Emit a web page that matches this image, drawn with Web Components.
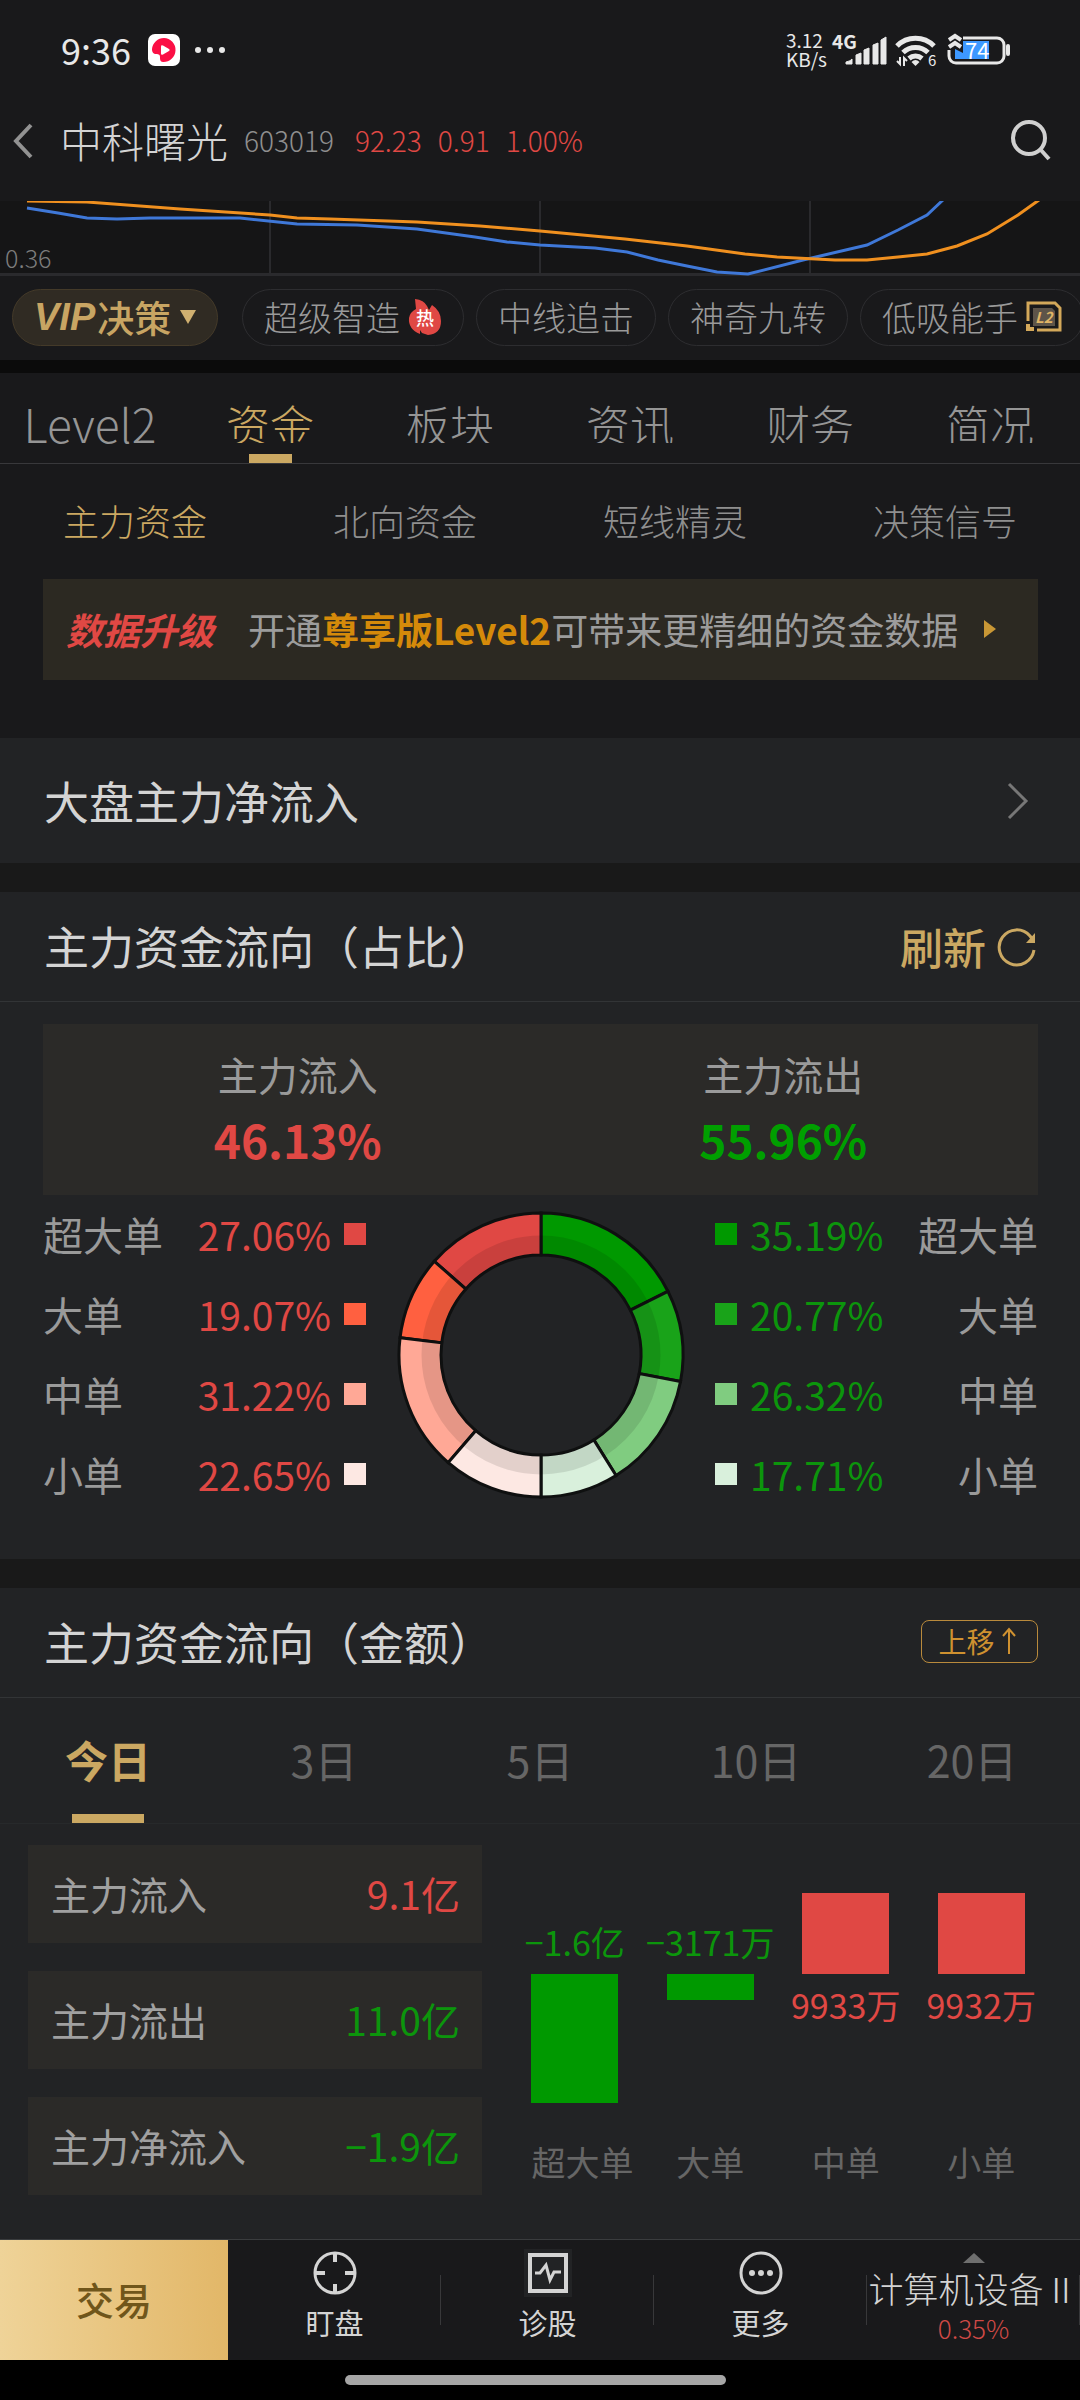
<!DOCTYPE html>
<html lang="zh-CN">
<head>
<meta charset="utf-8">
<meta name="viewport" content="width=device-width, initial-scale=1">
<title>中科曙光 603019</title>
<style>
  :root {
    --bg: #19191b;
    --band: #191919;
    --panel: #222325;
    --inset: #2b2a28;
    --line: #323436;
    --gold: #cba862;
    --red: #e04844;
    --green: #0c950c;
    --text: #d4d4d4;
    --muted: #9a9a9a;
    --dim: #666666;
  }
  body {
    margin: 0;
    background: #000;
    color: var(--text);
    font-family: "Noto Sans CJK SC", "Noto Sans", sans-serif;
  }
</style>
</head>
<body>
<stock-app></stock-app>

<script>
const BASE = `
  *, *::before, *::after { box-sizing: border-box; }
  button { font: inherit; color: inherit; background: none; border: 0; padding: 0; margin: 0; cursor: pointer; }
  a { color: inherit; text-decoration: none; }
  svg { display: block; flex: none; overflow: visible; }
`;

function define(name, css, html) {
  const template = document.createElement('template');
  customElements.define(name, class extends HTMLElement {
    constructor() {
      super();
      this.attachShadow({ mode: 'open' });
    }
    connectedCallback() {
      template.innerHTML = `<style>${BASE}${css}</style>${typeof html === 'function' ? html(this) : html}`;
      this.shadowRoot.replaceChildren(template.content.cloneNode(true));
    }
  });
}

/* ---------- system status bar ---------- */
define('status-bar', `
  :host { display: flex; align-items: center; justify-content: space-between; height: 100px; padding: 0 67px 0 61px; color: #e8e8e8; }
  .left, .right { display: flex; align-items: center; }
  time { font-size: 36px; line-height: 40px; margin-right: 17px; padding-bottom: 2px; }
  .dots { margin-left: 14px; }
  .speed { font-size: 19px; line-height: 19px; margin-right: 5px; padding-bottom: 2px; }
  .speed span { display: block; }
`, `
  <div class="left">
    <time>9:36</time>
    <svg width="32" height="32" viewBox="0 0 32 32"><rect width="32" height="32" rx="7" fill="#fff"/><path d="M16 4a12 12 0 1 1-1 24c-3 0-3-3-3-5 0-3-2-3-5-3-3-1-3-4-3-5A12 12 0 0 1 16 4z" fill="#fb0f45"/><path d="M13 12.500q0-2 2-1l6 3.500q1.500 1 0 2l-6 3.500q-2 1-2-1z" fill="#fff"/></svg>
    <svg class="dots" width="32" height="8" viewBox="0 0 32 8" fill="#e8e8e8"><circle cx="4" cy="4" r="3"/><circle cx="16" cy="4" r="3"/><circle cx="28" cy="4" r="3"/></svg>
  </div>
  <div class="right">
    <div class="speed"><span>3.12</span><span>KB/s</span></div>
    <svg width="60" height="36" viewBox="0 0 60 36" fill="#e8e8e8"><text x="0" y="17" font-size="19" font-weight="700">4G</text><path d="M14 32V30q5-1 6-3v5zM24 32V23l5-2v11zM32 32v-14l5-2v16zM41 32V13l5-2v21zM49 32V8l5-3v27z" stroke="#e8e8e8" stroke-linejoin="round"/></svg>
    <svg width="55" height="36" viewBox="0 0 55 36"><g fill="none" stroke="#e8e8e8" stroke-width="5"><path d="M5 14a26 26 0 0 1 37 0"/><path d="M11 20.500a18 18 0 0 1 25 0"/><path d="M17 26.500a10 10 0 0 1 13 0"/></g><path d="M23.500 34l-4-4q4-4 8 0z" fill="#e8e8e8"/><path d="M8 25v7l-3-3M12 34v-8l3 3" fill="none" stroke="#e8e8e8" stroke-width="2"/><text x="36" y="34" font-size="15" fill="#e8e8e8">6</text></svg>
    <svg width="66" height="34" viewBox="0 0 66 34"><path d="M16 5H50a7 7 0 0 1 7 7V23a7 7 0 0 1-7 7H9a7 7 0 0 1-7-7V17" fill="none" stroke="#e8e8e8" stroke-width="3"/><path d="M16 8H42V26H8V16l8 4z" fill="#3d98ff"/><path d="M61 13v8" stroke="#e8e8e8" stroke-width="4" stroke-linecap="round"/><path d="M2 7l6-4 6 4M2 14l6-4 6 4" fill="none" stroke="#e8e8e8" stroke-width="4"/><text x="18" y="26" font-size="22" fill="#fff">74</text></svg>
  </div>
`);

/* ---------- stock title bar ---------- */
define('stock-header', `
  :host { display: flex; align-items: center; height: 82px; padding: 0 26px 0 12px; margin-bottom: 19px; font-weight: 300; }
  h1 { font-size: 42px; line-height: 60px; font-weight: 300; margin: 0 16px 2px 26px; }
  .code { font-size: 28px; line-height: 60px; color: #8f8f8f; margin: 0 21px 2px 0; }
  .quote { display: flex; gap: 16px; font-size: 28px; line-height: 60px; color: var(--red); flex: 1; margin-bottom: 2px; }
`, `
  <button aria-label="返回"><svg width="22" height="36" viewBox="0 0 22 36"><path d="M19 2L4 18L19 34" fill="none" stroke="#929292" stroke-width="4"/></svg></button>
  <h1>中科曙光</h1><span class="code">603019</span>
  <div class="quote"><span>92.23</span><span>0.91</span><span>1.00%</span></div>
  <button aria-label="搜索"><svg width="44" height="44" viewBox="0 0 44 44" fill="none" stroke="#d0d0d0" stroke-width="4"><circle cx="19" cy="19" r="16"/><path d="M30 30L39 40"/></svg></button>
`);

/* ---------- bottom slice of the indicator chart ---------- */
define('indicator-chart', `
  :host { display: block; position: relative; height: 75px; background: #151516; border-bottom: 3px solid #2a2a2d; }
  svg { width: 100%; height: 75px; overflow: hidden; }
  span { position: absolute; left: 5px; bottom: 1px; font-size: 25px; line-height: 30px; font-weight: 300; color: #7d7d7d; }
`, `
  <svg viewBox="0 201 1080 75" preserveAspectRatio="none" fill="none">
    <path d="M270 201V276M540 201V276M810 201V276" stroke="#2a2a2d" stroke-width="2"/>
    <path d="M27 208L58 213L87 218L117 219L150 218H240L297 224L357 225L417 229L475 237L507 242L540 245L595 248L627 252L658 260L687 266L717 272L748 274L803 260L867 245L898 230L927 215L943 200" stroke="#3f78d8" stroke-width="3"/>
    <path d="M27 201L87 202L180 209L270 215L297 218L330 219L417 222L480 226L540 231L625 239L687 246L745 254L777 257L835 260H867L898 257L927 254L957 246L987 234L1018 215L1039 200" stroke="#f0901f" stroke-width="3"/>
  </svg>
  <span>0.36</span>
`);

/* ---------- strategy pills ---------- */
define('strategy-pills', `
  :host { display: flex; align-items: center; gap: 12px; height: 84px; padding: 0 0 1px 12px; overflow: hidden; font-weight: 300; }
  button { display: flex; align-items: center; gap: 8px; flex: none; height: 57px; padding: 0 21px 1px; border: 1px solid #2d2d30; border-radius: 29px; font-size: 34px; line-height: 50px; color: var(--muted); white-space: nowrap; }
  .vip { gap: 2px; width: 206px; margin-right: 12px; background: #302b23; border-color: #443a29; color: #c8a563; font-size: 37px; font-weight: 500; }
  i { font: italic 700 38px/50px "Liberation Sans", sans-serif; }
  .vip svg { margin-left: 7px; }
`, `
  <button class="vip"><i>VIP</i><span>决策</span><svg width="16" height="14" viewBox="0 0 16 14"><path d="M0 0H16L8 14z" fill="#d0b070"/></svg></button>
  <button>超级智造<svg width="34" height="36" viewBox="0 0 34 36"><path d="M7 0q9 1 12 7l2 4 3-5q9 6 9 16 0 13-13 14l-6-2-2-3v4Q0 30 1 19q1-6 7-9z" fill="#e04844"/><text x="8" y="26" font-size="18" font-weight="500" fill="#fff">热</text></svg></button>
  <button>中线追击</button>
  <button>神奇九转</button>
  <button>低吸能手<svg width="36" height="32" viewBox="0 0 36 32"><path d="M2 20V2H29L34 7V29H11" fill="none" stroke="#d3a85a" stroke-width="3"/><path d="M0 23h4v3h4v4H0z" fill="#d3a85a"/><path d="M7 7h19l3 3v15H7z" fill="#5d5449"/><text x="9" y="22" font-size="15" font-weight="700" font-style="italic" fill="#e0b566">L2</text></svg></button>
`);

/* ---------- main tabs ---------- */
define('main-tabs', `
  :host { display: flex; height: 104px; border-top: 13px solid #0b0b0b; border-bottom: 1px solid #38383b; }
  button { flex: 1; display: flex; flex-direction: column; align-items: center; justify-content: space-between; padding-top: 20px; color: #959595; font-size: 44px; font-weight: 300; }
  span { display: block; height: 50px; line-height: 62px; overflow: hidden; }
  .latin { font-size: 46px; line-height: 60px; overflow: visible; }
  button::after { content: ""; width: 43px; height: 9px; }
  .on { color: var(--gold); }
  .on::after { background: var(--gold); }
`, `
  <button><span class="latin">Level2</span></button>
  <button class="on"><span>资金</span></button>
  <button><span>板块</span></button>
  <button><span>资讯</span></button>
  <button><span>财务</span></button>
  <button><span>简况</span></button>
`);

define('sub-tabs', `
  :host { display: flex; height: 115px; }
  button { flex: 1; padding-bottom: 4px; color: #8f8f8f; font-size: 36px; line-height: 50px; font-weight: 300; }
  .on { color: var(--gold); }
`, `
  <button class="on">主力资金</button><button>北向资金</button><button>短线精灵</button><button>决策信号</button>
`);

define('upgrade-banner', `
  :host { display: block; padding: 0 42px 58px 43px; }
  a { display: flex; align-items: center; height: 101px; padding: 0 42px 2px 23px; background: #2c2922; color: #9c9c9c; font-size: 37px; line-height: 50px; white-space: nowrap; }
  em { color: var(--red); font-weight: 700; margin-right: 34px; }
  b { color: #d58a0a; font-weight: 700; }
  svg { margin-left: auto; }
`, `
  <a href="#"><em>数据升级</em><span>开通<b>尊享版Level2</b>可带来更精细的资金数据</span>
  <svg width="12" height="18" viewBox="0 0 12 18"><path d="M0 0L12 9L0 18z" fill="#c99735"/></svg></a>
`);

/* ---------- panel with a title row and a slotted action ---------- */
define('data-panel', `
  :host { display: block; background: var(--panel); margin-bottom: 29px; }
  header { display: flex; align-items: center; justify-content: space-between; height: 110px; padding: 0 42px 2px 44px; border-bottom: 1px solid var(--line); }
  :host([plain]) header { height: 125px; padding: 0 50px 0 44px; border-bottom: 0; }
  h2 { margin: 0; font-size: 45px; line-height: 60px; font-weight: 400; white-space: nowrap; }
`, host => `
  <header><h2>${host.getAttribute('heading')}</h2><slot name="action"></slot></header>
  <slot></slot>
`);

define('row-arrow', `:host { display: block; }`, `
  <svg width="24" height="38" viewBox="0 0 24 38"><path d="M3 2L20 19L3 36" fill="none" stroke="#777" stroke-width="3"/></svg>
`);

define('refresh-action', `
  :host { display: block; }
  button { display: flex; align-items: center; gap: 12px; color: var(--gold); font-size: 43px; line-height: 60px; font-weight: 500; }
  svg { margin-top: 4px; }
`, `
  <button>刷新<svg width="40" height="40" viewBox="0 0 40 40"><path d="M36 22A17.500 17.500 0 1 1 32 8L35 12" fill="none" stroke="#cba862" stroke-width="3"/><path d="M37 5V15H28z" fill="#cba862"/></svg></button>
`);

define('move-up-action', `
  :host { display: block; }
  button { display: flex; align-items: center; justify-content: center; gap: 6px; height: 43px; width: 117px; padding: 0 4px 2px 0; border: 1px solid #b98a3c; border-radius: 8px; color: #cf9130; font-size: 28px; line-height: 36px; white-space: nowrap; }
`, `<button><span>上移</span><svg width="16" height="28" viewBox="0 0 16 28"><path d="M8 27V2M2 9L8 2L14 9" fill="none" stroke="#cf9130" stroke-width="2"/></svg></button>`);

/* ---------- inflow / outflow share ---------- */
const SHARES = [
  ['超大单', 27.06, 35.19, '#e04844', '#009900'],
  ['大单', 19.07, 20.77, '#ff6040', '#19a319'],
  ['中单', 31.22, 26.32, '#ffa896', '#80cc80'],
  ['小单', 22.65, 17.71, '#fde8e3', '#d9f0dc'],
];

function donut() {
  const polar = (r, deg) => {
    const a = (deg - 90) * Math.PI / 180;
    return `${(145 + r * Math.cos(a)).toFixed(2)} ${(145 + r * Math.sin(a)).toFixed(2)}`;
  };
  const slice = (from, to, fill) =>
    `<path d="M${polar(142, from)}A142 142 0 0 1 ${polar(142, to)}L${polar(100, to)}A100 100 0 0 0 ${polar(100, from)}Z" fill="${fill}"/>`;
  let g = 0, r = 360, out = '';
  for (const [, inPct, outPct, red, green] of SHARES) {
    const g2 = Math.min(180, g + outPct * 1.8);
    const r2 = Math.max(180, r - inPct * 1.8);
    out += slice(g, g2, green) + slice(r2, r, red);
    g = g2; r = r2;
  }
  return `<svg width="290" height="290" viewBox="0 0 290 290">
    <g stroke="#0f1010" stroke-width="3">${out}</g>
    <circle cx="145" cy="145" r="110" fill="none" stroke="#000" stroke-opacity=".1" stroke-width="19"/></svg>`;
}

define('flow-share', `
  :host { display: block; padding: 22px 42px 44px 43px; }
  .sum { display: flex; height: 171px; padding: 24px 12px 0; background: var(--inset); }
  .sum div { flex: 1; text-align: center; font-size: 40px; line-height: 52px; color: var(--muted); }
  .sum strong { display: block; margin-top: 9px; font-size: 46px; line-height: 60px; }
  .in { color: var(--red); }
  .out { color: #009f00; }
  .body { display: flex; align-items: center; justify-content: space-between; }
  ul { list-style: none; margin: 0; padding: 0; width: 323px; }
  li { display: flex; align-items: center; height: 80px; padding-bottom: 2px; line-height: 60px; }
  .name { flex: 1; font-size: 40px; color: var(--muted); }
  .pct { font-size: 39px; }
  .out .pct { color: var(--green); }
  .out .name { text-align: right; }
  li i { width: 22px; height: 22px; }
  .in i { margin-left: 13px; }
  .out i { margin-right: 13px; }
`, `
  <div class="sum">
    <div>主力流入<strong class="in">46.13%</strong></div>
    <div>主力流出<strong class="out">55.96%</strong></div>
  </div>
  <div class="body">
    <ul class="in">${SHARES.map(s => `<li><span class="name">${s[0]}</span><span class="pct">${s[1].toFixed(2)}%</span><i style="background:${s[3]}"></i></li>`).join('')}</ul>
    ${donut()}
    <ul class="out">${SHARES.map(s => `<li><i style="background:${s[4]}"></i><span class="pct">${s[2].toFixed(2)}%</span><span class="name">${s[0]}</span></li>`).join('')}</ul>
  </div>
`);

/* ---------- inflow / outflow amounts ---------- */
define('period-tabs', `
  :host { display: flex; height: 126px; border-bottom: 1px solid #27292b; }
  button { flex: 1; display: flex; flex-direction: column; align-items: center; justify-content: space-between; padding-top: 31px; color: var(--dim); font-size: 43px; line-height: 60px; }
  button::after { content: ""; width: 72px; height: 9px; }
  .on { color: var(--gold); font-weight: 700; }
  .on::after { background: var(--gold); }
`, `
  <button class="on">今日</button><button>3日</button><button>5日</button><button>10日</button><button>20日</button>
`);

const BARS = [
  ['超大单', '−1.6亿', -129],
  ['大单', '−3171万', -26],
  ['中单', '9933万', 81],
  ['小单', '9932万', 81],
];

define('flow-amount', `
  :host { display: grid; grid-template-columns: 454fr 542fr; column-gap: 25px; padding: 21px 31px 40px 28px; }
  dl { margin: 0; display: flex; flex-direction: column; gap: 28px; }
  dl div { display: flex; align-items: center; justify-content: space-between; height: 98px; padding: 0 22px 2px 23px; background: var(--inset); font-size: 39px; line-height: 60px; white-space: nowrap; }
  dt { color: #a0a0a0; }
  dd { margin: 0; }
  .red { color: var(--red); }
  .green { color: var(--green); }
  .chart { display: flex; }
  .col { flex: 1; display: flex; flex-direction: column; align-items: center; font-size: 34px; line-height: 40px; white-space: nowrap; }
  .up, .down { width: 100%; display: flex; flex-direction: column; align-items: center; }
  .up { height: 129px; justify-content: flex-end; }
  .down { height: 168px; }
  .up span { margin-bottom: 12px; }
  .down span { margin-top: 11px; }
  i { width: 64%; }
  .red i { background: #e04844; }
  .green i { background: #009900; }
  .cat { width: 64%; text-align: center; color: var(--dim); }
`, `
  <dl>
    <div><dt>主力流入</dt><dd class="red">9.1亿</dd></div>
    <div><dt>主力流出</dt><dd class="green">11.0亿</dd></div>
    <div><dt>主力净流入</dt><dd class="green">−1.9亿</dd></div>
  </dl>
  <div class="chart">${BARS.map(([cat, label, v]) => {
    const bar = `<i style="height:${Math.abs(v)}px"></i>`, txt = `<span>${label}</span>`;
    return `<div class="col ${v > 0 ? 'red' : 'green'}"><div class="up">${v > 0 ? bar : txt}</div><div class="down">${v > 0 ? txt : bar}</div><div class="cat">${cat}</div></div>`;
  }).join('')}</div>
`);

/* ---------- bottom navigation ---------- */
define('bottom-nav', `
  :host { display: block; background: #000; }
  nav { display: flex; height: 121px; border-top: 1px solid #3a3c3e; background: var(--bg); }
  button { display: flex; flex-direction: column; align-items: center; flex: 213; position: relative; min-width: 0; white-space: nowrap; font-size: 29px; line-height: 36px; }
  .trade { flex: 228; justify-content: center; padding-bottom: 2px; background: linear-gradient(90deg, #efd398, #e2b768); color: #70561b; font-size: 38px; font-weight: 500; }
  .tool { padding-top: 9px; gap: 7px; }
  .tool::after, .sector::after { content: ""; position: absolute; right: 0; top: 35px; width: 1px; height: 50px; background: #38383a; }
  .sector { padding-top: 13px; font-weight: 300; }
  .sector span { font-size: 35px; line-height: 50px; }
  .sector small { font-size: 26px; line-height: 30px; color: #d04a46; }
  .home { display: block; width: 381px; height: 10px; margin: 0 auto; border-radius: 5px; background: #a6a6a6; }
  .gesture { height: 40px; padding-top: 15px; padding-right: 9px; }
`, `
  <nav>
    <button class="trade">交易</button>
    <button class="tool"><svg width="48" height="48" viewBox="0 0 48 48" fill="none" stroke="#d4d4d4" stroke-width="3"><circle cx="24" cy="24" r="20"/><path d="M24 4v9M24 35v9M4 24h10M34 24h10" stroke-width="4"/></svg>盯盘</button>
    <button class="tool"><svg width="48" height="48" viewBox="0 0 48 48"><rect width="48" height="48" fill="#222325"/><g fill="none" stroke="#d4d4d4" stroke-width="4"><rect x="6" y="6" width="36" height="36"/><path d="M11 24h5l6-8 4 15 4-8h7" stroke-width="3"/></g></svg>诊股</button>
    <button class="tool"><svg width="48" height="48" viewBox="0 0 48 48"><circle cx="24" cy="24" r="20" fill="none" stroke="#d4d4d4" stroke-width="3"/><g fill="#d4d4d4"><circle cx="15" cy="24" r="3"/><circle cx="24" cy="24" r="3"/><circle cx="33" cy="24" r="3"/></g></svg>更多</button>
    <button class="sector"><svg width="22" height="10" viewBox="0 0 22 10"><path d="M11 0L22 10H0z" fill="#6f6f6f"/></svg><span>计算机设备Ⅱ</span><small>0.35%</small></button>
  </nav>
  <div class="gesture"><i class="home"></i></div>
`);

define('stock-app', `
  :host { display: flex; flex-direction: column; min-height: 100vh; background: var(--bg); overflow: hidden; }
  main { flex: 1; display: flex; flex-direction: column; background: var(--band); }
  .top { background: var(--bg); }
  .last { flex: 1; margin-bottom: 0; }
`, `
  <status-bar></status-bar>
  <stock-header></stock-header>
  <indicator-chart></indicator-chart>
  <strategy-pills></strategy-pills>
  <main-tabs></main-tabs>
  <main>
    <div class="top"><sub-tabs></sub-tabs><upgrade-banner></upgrade-banner></div>
    <data-panel heading="大盘主力净流入" plain><row-arrow slot="action"></row-arrow></data-panel>
    <data-panel heading="主力资金流向（占比）"><refresh-action slot="action"></refresh-action><flow-share></flow-share></data-panel>
    <data-panel heading="主力资金流向（金额）" class="last"><move-up-action slot="action"></move-up-action><period-tabs></period-tabs><flow-amount></flow-amount></data-panel>
  </main>
  <bottom-nav></bottom-nav>
`);
</script>
</body>
</html>
